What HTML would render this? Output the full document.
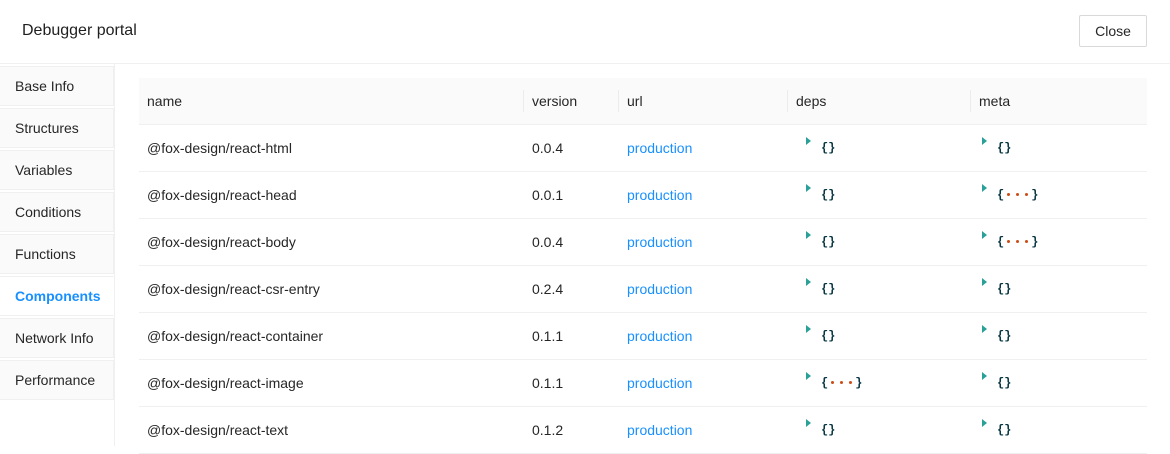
<!DOCTYPE html>
<html><head><style>
*{box-sizing:border-box;margin:0;padding:0}
body{width:1170px;height:446px;overflow:hidden;background:#fff;font-family:"Liberation Sans",Arial,sans-serif;color:#262626;font-size:14px;position:relative}
.title{position:absolute;left:22px;top:22px;font-size:16px;font-weight:500;color:#1f1f1f}
.close{position:absolute;left:1079px;top:15px;width:68px;height:32px;border:1px solid #d9d9d9;border-radius:2px;font-size:14px;line-height:30px;text-align:center;color:#262626}
.hline{position:absolute;left:0;top:63px;width:1170px;height:1px;background:#f0f0f0}
.side{position:absolute;left:0;top:64px;width:115px;height:382px;border-right:1px solid #f0f0f0}
.tab{position:absolute;left:0;width:114px;height:40px;background:#fafafa;border:1px solid #f0f0f0;border-left:none;padding-left:15px;line-height:38px;font-size:14px;color:#262626}
.tab.act{background:#fff;color:#1890ff;font-weight:bold;border-right-color:#fff}
.tbl{position:absolute;left:139px;top:78px;width:1008px}
.row{position:relative;height:47px;border-bottom:1px solid #f0f0f0}
.hd{background:#fafafa}
.c{position:absolute;top:0;line-height:46px;padding-left:8px}
.hd .sep{position:absolute;top:12px;width:1px;height:22px;background:#ececec}
.u{color:#1890ff}
.j{position:absolute;top:16px;font-family:"Liberation Mono",monospace;font-size:12px;font-weight:bold;color:#073642;line-height:14px;white-space:nowrap}
.j i{font-style:normal;color:#cb4b16;letter-spacing:0}
.d{display:inline-block;width:3px;height:3px;border-radius:50%;background:#cb4b16;margin:0 3px;vertical-align:2px}
.tri{position:absolute;width:0;height:0;border-left:5px solid #2aa198;border-top:4px solid transparent;border-bottom:4px solid transparent;top:-4px;left:-15px}
</style></head><body>
<div class="title">Debugger portal</div>
<div class="close">Close</div>
<div class="hline"></div>
<div class="side">
<div class="tab" style="top:2px">Base Info</div>
<div class="tab" style="top:44px">Structures</div>
<div class="tab" style="top:86px">Variables</div>
<div class="tab" style="top:128px">Conditions</div>
<div class="tab" style="top:170px">Functions</div>
<div class="tab act" style="top:212px">Components</div>
<div class="tab" style="top:254px">Network Info</div>
<div class="tab" style="top:296px">Performance</div>
</div>
<div class="tbl">
<div class="row hd"><div class="c" style="left:0">name</div><div class="sep" style="left:384px"></div><div class="c" style="left:385px">version</div><div class="sep" style="left:479px"></div><div class="c" style="left:480px">url</div><div class="sep" style="left:648px"></div><div class="c" style="left:649px">deps</div><div class="sep" style="left:831px"></div><div class="c" style="left:832px">meta</div></div>
<div class="row"><div class="c">@fox-design/react-html</div><div class="c" style="left:385px">0.0.4</div><div class="c u" style="left:480px">production</div><div class="j" style="left:682px"><span class="tri"></span>{}</div><div class="j" style="left:858px"><span class="tri"></span>{}</div></div>
<div class="row"><div class="c">@fox-design/react-head</div><div class="c" style="left:385px">0.0.1</div><div class="c u" style="left:480px">production</div><div class="j" style="left:682px"><span class="tri"></span>{}</div><div class="j" style="left:858px"><span class="tri"></span>{<span class="d"></span><span class="d"></span><span class="d"></span>}</div></div>
<div class="row"><div class="c">@fox-design/react-body</div><div class="c" style="left:385px">0.0.4</div><div class="c u" style="left:480px">production</div><div class="j" style="left:682px"><span class="tri"></span>{}</div><div class="j" style="left:858px"><span class="tri"></span>{<span class="d"></span><span class="d"></span><span class="d"></span>}</div></div>
<div class="row"><div class="c">@fox-design/react-csr-entry</div><div class="c" style="left:385px">0.2.4</div><div class="c u" style="left:480px">production</div><div class="j" style="left:682px"><span class="tri"></span>{}</div><div class="j" style="left:858px"><span class="tri"></span>{}</div></div>
<div class="row"><div class="c">@fox-design/react-container</div><div class="c" style="left:385px">0.1.1</div><div class="c u" style="left:480px">production</div><div class="j" style="left:682px"><span class="tri"></span>{}</div><div class="j" style="left:858px"><span class="tri"></span>{}</div></div>
<div class="row"><div class="c">@fox-design/react-image</div><div class="c" style="left:385px">0.1.1</div><div class="c u" style="left:480px">production</div><div class="j" style="left:682px"><span class="tri"></span>{<span class="d"></span><span class="d"></span><span class="d"></span>}</div><div class="j" style="left:858px"><span class="tri"></span>{}</div></div>
<div class="row"><div class="c">@fox-design/react-text</div><div class="c" style="left:385px">0.1.2</div><div class="c u" style="left:480px">production</div><div class="j" style="left:682px"><span class="tri"></span>{}</div><div class="j" style="left:858px"><span class="tri"></span>{}</div></div>
</div>
</body></html>
